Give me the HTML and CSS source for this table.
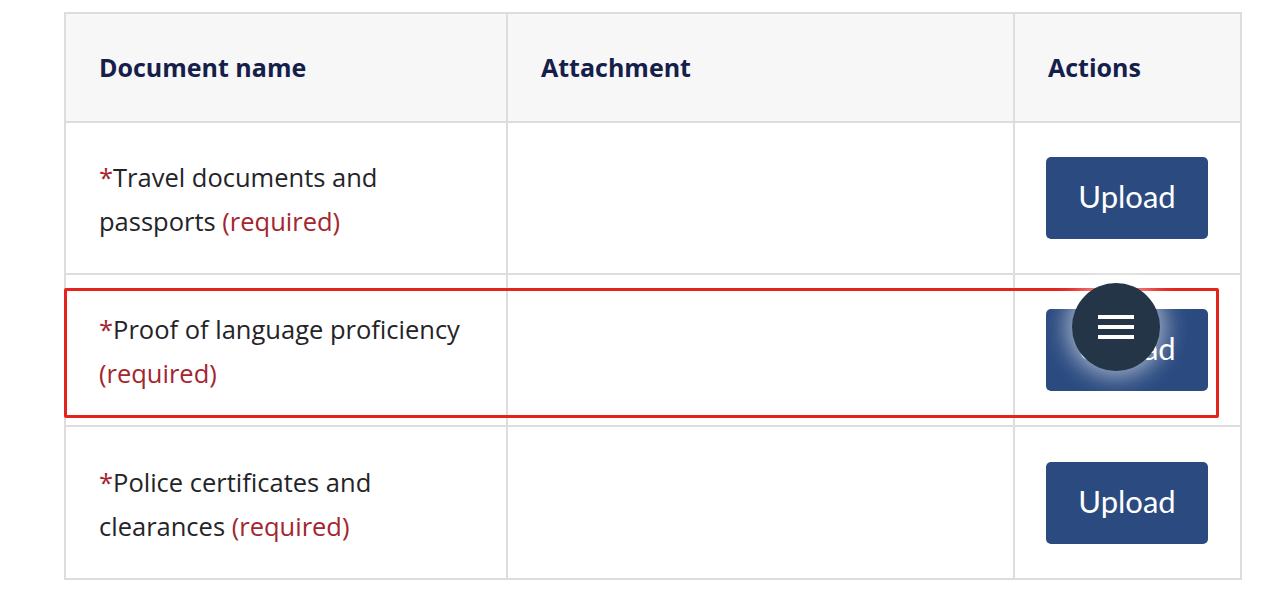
FILE: index.html
```html
<!DOCTYPE html>
<html lang="en">
<head>
<meta charset="utf-8">
<title>Documents</title>
<link rel="stylesheet" href="styles.css">
</head>
<body>
<div class="page">
  <table class="docs">
    <colgroup>
      <col class="c-name">
      <col class="c-att">
      <col class="c-act">
    </colgroup>
    <thead>
      <tr>
        <th>Document name</th>
        <th>Attachment</th>
        <th>Actions</th>
      </tr>
    </thead>
    <tbody>
      <tr>
        <td class="name"><span class="star">*</span>Travel documents and passports <span class="req">(required)</span></td>
        <td></td>
        <td class="act"><button class="btn">Upload</button></td>
      </tr>
      <tr>
        <td class="name"><span class="star">*</span>Proof of language proficiency <span class="req">(required)</span></td>
        <td></td>
        <td class="act"><button class="btn">Upload</button></td>
      </tr>
      <tr class="last">
        <td class="name"><span class="star">*</span>Police certificates and clearances <span class="req">(required)</span></td>
        <td></td>
        <td class="act"><button class="btn">Upload</button></td>
      </tr>
    </tbody>
  </table>
  <div class="highlight"></div>
  <button class="fab" aria-label="Menu">
    <span class="bar"></span><span class="bar"></span><span class="bar"></span>
  </button>
</div>
</body>
</html>
```

FILE: styles.css
```css
html, body {
  margin: 0;
  padding: 0;
  background: #ffffff;
}
.page {
  position: relative;
  padding: 12px 0 0 64px;
  font-family: "Open Sans", "Noto Sans", sans-serif;
}
.docs {
  border-collapse: collapse;
  table-layout: fixed;
  width: 1178px;
  border: 2px solid #dddddd;
}
.c-name { width: 442px; }
.c-att { width: 507px; }
.c-act { width: 227px; }
.docs th,
.docs td {
  border: 2px solid #dddddd;
  text-align: left;
  vertical-align: middle;
}
.docs th {
  background: #f7f7f7;
  color: #15204a;
  font-weight: 700;
  font-size: 25px;
  height: 109px;
  padding: 0 32px 2px 33px;
  box-sizing: border-box;
}
.docs td {
  height: 148px;
  padding: 2px 32px 0 33px;
  font-size: 25.5px;
  line-height: 44px;
  color: #242428;
}
.docs .last td {
  height: 149px;
}
.docs td.act {
  padding: 0 32px 0 31px;
}
.star,
.req {
  color: #a3262e;
}
.btn {
  display: block;
  width: 162px;
  height: 82px;
  border: 0;
  border-radius: 5px;
  background: #2b4b80;
  color: #ffffff;
  font-family: Lato, "Open Sans", sans-serif;
  font-size: 31px;
  padding: 0 0 4px;
  cursor: pointer;
}
.highlight {
  position: absolute;
  left: 64px;
  top: 288px;
  width: 1155px;
  height: 130px;
  box-sizing: border-box;
  border: 3px solid #e3231c;
  border-radius: 2px;
  pointer-events: none;
}
.fab {
  position: absolute;
  left: 1072px;
  top: 283px;
  width: 88px;
  height: 88px;
  border-radius: 50%;
  border: 0;
  background: #243548;
  box-shadow: 0 0 22px 6px rgba(255, 255, 255, 0.55);
  display: flex;
  flex-direction: column;
  align-items: center;
  justify-content: center;
  gap: 6px;
  padding: 0;
}
.fab .bar {
  display: block;
  width: 36px;
  height: 4px;
  background: #ffffff;
}
```
